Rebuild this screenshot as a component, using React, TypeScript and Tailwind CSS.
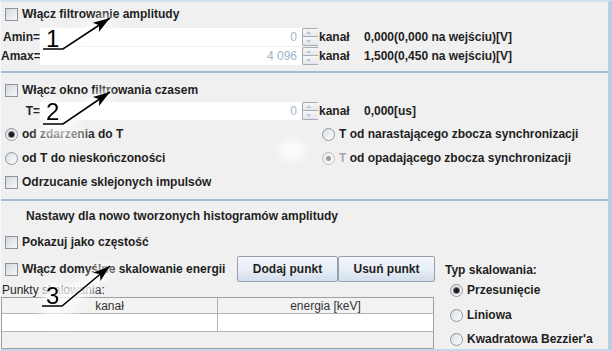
import React from "react";

const Check = () => (
  <span className="w-[13px] h-[13px] shrink-0 border border-[#8f9296] bg-linear-to-br from-[#d2d8df] to-[#f7f8fa]" />
);

const Radio = ({ on, dim }: { on?: boolean; dim?: boolean }) => (
  <span
    className={
      dim
        ? "w-[13px] h-[13px] shrink-0 rounded-full border border-[#b9bec4] bg-linear-to-br from-[#e6e8eb] to-white flex items-center justify-center"
        : "w-[13px] h-[13px] shrink-0 rounded-full border border-[#8e96a0] bg-linear-to-br from-[#d8dde3] to-white flex items-center justify-center"
    }
  >
    {on && (
      <span
        className={
          dim
            ? "w-[5px] h-[5px] rounded-full bg-[#9a9a9a]"
            : "w-[5px] h-[5px] rounded-full bg-[#1b1b1b] ring-1 ring-[#7d7d7d]"
        }
      />
    )}
  </span>
);

const CheckRow = ({ label, className = "" }: { label: string; className?: string }) => (
  <div className={"flex items-center h-[20px] gap-[4px] pl-[4px] " + className}>
    <Check />
    <span>{label}</span>
  </div>
);

const RadioRow = ({ label, on, dim }: { label: React.ReactNode; on?: boolean; dim?: boolean }) => (
  <div className="flex items-center h-[20px] gap-[4px]">
    <Radio on={on} dim={dim} />
    <span>{label}</span>
  </div>
);

const Spinner = () => (
  <div className="w-[16px] h-[18px] flex flex-col">
    <div className="h-[9px] border-l border-t border-b border-[#a9adb3] rounded-tl-[2px] bg-linear-to-b from-[#f6f7f9] to-[#e3e6ea] flex items-center pl-[3px]">
      <svg width="5" height="3" viewBox="0 0 5 3">
        <path d="M0 3 L2.5 0 L5 3 Z" fill="#bcc6d2" />
      </svg>
    </div>
    <div className="h-[9px] border-l border-b border-[#a9adb3] rounded-bl-[2px] bg-linear-to-b from-[#f6f7f9] to-[#e3e6ea] flex items-center pl-[3px]">
      <svg width="5" height="3" viewBox="0 0 5 3">
        <path d="M0 0 L2.5 3 L5 0 Z" fill="#bcc6d2" />
      </svg>
    </div>
  </div>
);

const ValueRow = ({
  label,
  value,
  reading,
  className = "",
}: {
  label: string;
  value: string;
  reading: string;
  className?: string;
}) => (
  <div className={"flex items-center h-[18px] " + className}>
    <span className="w-[39px] text-right">{label}</span>
    <div className="w-[262px] h-[18px] bg-white flex items-center justify-end pr-[5px] font-normal text-[#a2b5cc]">
      {value}
    </div>
    <Spinner />
    <span className="w-[46px] pl-[1px]">kanał</span>
    <span>{reading}</span>
  </div>
);

const Button = ({ label, className = "" }: { label: string; className?: string }) => (
  <div
    className={
      "h-[26px] flex items-center justify-center border border-[#96a0ac] rounded-[2px] bg-linear-to-b from-[#f4f7fb] via-[#e8eef6] to-[#d3dfee] " +
      className
    }
  >
    {label}
  </div>
);

// numbered arrows drawn over the form
const marks = [
  { n: "1", lx: 43, ly: 49, tx: 110, ty: 18, dx: 46, dy: 47 },
  { n: "2", lx: 43, ly: 124, tx: 110, ty: 92, dx: 46, dy: 120 },
  { n: "3", lx: 42, ly: 306, tx: 110, ty: 266, dx: 46, dy: 304 },
];

const head = (sx: number, sy: number, tx: number, ty: number) => {
  const len = Math.hypot(tx - sx, ty - sy);
  const ux = (tx - sx) / len;
  const uy = (ty - sy) / len;
  const bx = tx - 17 * ux;
  const by = ty - 17 * uy;
  const nx = -uy;
  const ny = ux;
  const pts = [
    [tx, ty],
    [bx + 5.5 * nx, by + 5.5 * ny],
    [bx + 4 * ux, by + 4 * uy],
    [bx - 5.5 * nx, by - 5.5 * ny],
  ];
  return pts.map((p) => p.join(",")).join(" ");
};

const Annotations = () => (
  <svg
    className="absolute left-[-1px] top-[-2px] pointer-events-none"
    width="612"
    height="351"
    viewBox="0 0 612 351"
  >
    <defs>
      <filter id="halo" x="-50%" y="-50%" width="200%" height="200%">
        <feGaussianBlur stdDeviation="4" />
      </filter>
    </defs>
    <g filter="url(#halo)" fill="#fff">
      <ellipse cx="292" cy="150" rx="14" ry="10" opacity="0.8" />
      <ellipse cx="62" cy="134" rx="28" ry="5" opacity="0.75" />
      <ellipse cx="70" cy="290" rx="26" ry="5" opacity="0.75" />
      <ellipse cx="60" cy="318" rx="22" ry="7" opacity="0.6" />
    </g>
    {marks.map((m) => {
      const line = `${m.lx},${m.ly} ${m.lx + 20},${m.ly} ${m.tx},${m.ty}`;
      return (
        <g key={m.n}>
          <g filter="url(#halo)" opacity="0.85">
            <polyline points={line} fill="none" stroke="#fff" strokeWidth="12" strokeLinejoin="round" />
            <text
              x={m.dx}
              y={m.dy}
              fontFamily="'Liberation Sans', Arial, sans-serif"
              fontSize="24"
              fontWeight="400"
              fill="#fff"
              stroke="#fff"
              strokeWidth="8"
            >
              {m.n}
            </text>
          </g>
          <polyline points={line} fill="none" stroke="#000" strokeWidth="1.6" />
          <polygon points={head(m.lx + 20, m.ly, m.tx, m.ty)} fill="#000" />
          <text
            x={m.dx}
            y={m.dy}
            fontFamily="'Liberation Sans', Arial, sans-serif"
            fontSize="24"
            fontWeight="400"
            fill="#000"
          >
            {m.n}
          </text>
        </g>
      );
    })}
  </svg>
);

export default function App() {
  return (
    <div className="relative w-[612px] h-[351px] overflow-hidden bg-[#f0f0f0] border-l border-l-[#f6f8fb] border-t-2 border-t-[#d3e0f0] border-b-2 border-b-[#c5d6ea] border-r-4 border-r-[#bacde4] font-['Liberation_Sans',Arial,sans-serif] text-[12px] font-bold text-[#1f1f1f] leading-none">
      {/* amplituda */}
      <div className="pt-[2px]">
        <CheckRow label="Włącz filtrowanie amplitudy" />
        <ValueRow className="mt-[4px]" label="Amin=" value="0" reading="0,000(0,000 na wejściu)[V]" />
        <ValueRow className="mt-[1px]" label="Amax=" value="4 096" reading="1,500(0,450 na wejściu)[V]" />
      </div>
      <div className="mt-[6px] h-[2px] bg-[#aab9d8]" />

      {/* okno czasowe */}
      <div>
        <CheckRow className="mt-[7px]" label="Włącz okno filtrowania czasem" />
        <ValueRow className="mt-[2px]" label="T=" value="0" reading="0,000[us]" />
        <div className="mt-[4px] flex pl-[4px]">
          <div className="w-[317px]">
            <RadioRow on label="od zdarzenia do T" />
          </div>
          <RadioRow label="T od narastającego zbocza synchronizacji" />
        </div>
        <div className="mt-[4px] flex pl-[4px]">
          <div className="w-[317px]">
            <RadioRow label="od T do nieskończoności" />
          </div>
          <RadioRow
            on
            dim
            label={
              <>
                <span className="text-[#a8a8a8]">T</span> od opadającego zbocza synchronizacji
              </>
            }
          />
        </div>
        <CheckRow className="mt-[4px]" label="Odrzucanie sklejonych impulsów" />
      </div>
      <div className="mt-[7px] h-[2px] bg-[#aab9d8]" />

      {/* histogramy */}
      <div>
        <div className="mt-[5px] h-[20px] flex items-center pl-[25px]">
          Nastawy dla nowo tworzonych histogramów amplitudy
        </div>
        <CheckRow className="mt-[6px]" label="Pokazuj jako częstość" />
        <div className="mt-[4px] flex">
          <div className="w-[434px] flex flex-col">
            <div className="flex items-center">
              <div className="w-[236px] flex items-center gap-[4px] pl-[4px]">
                <Check />
                <span>Włącz domyślne skalowanie energii</span>
              </div>
              <Button className="w-[101px]" label="Dodaj punkt" />
              <Button className="w-[97px]" label="Usuń punkt" />
            </div>
            <div className="h-[15px] flex items-center pl-[1px] font-normal">Punkty skalowania:</div>
            <div className="w-[433px] h-[52px] border border-[#a0a0a0] flex flex-col font-normal text-[#333]">
              <div className="h-[16px] flex border-b border-[#b4b4b4] bg-[#f3f3f3]">
                <div className="w-[216px] border-r border-[#b4b4b4] flex items-center justify-center">kanał</div>
                <div className="flex-1 flex items-center justify-center">energia [keV]</div>
              </div>
              <div className="h-[18px] flex bg-white border-b border-[#b4b4b4]">
                <div className="w-[216px] border-r border-[#b4b4b4]" />
              </div>
              <div className="flex-1" />
            </div>
          </div>
          <div className="ml-[10px] pt-[4px] flex flex-col">
            <div className="h-[20px] flex items-center">Typ skalowania:</div>
            <div className="pl-[5px]">
              <RadioRow on label="Przesunięcie" />
              <div className="mt-[5px]">
                <RadioRow label="Liniowa" />
              </div>
              <div className="mt-[4px]">
                <RadioRow label="Kwadratowa Bezzier'a" />
              </div>
            </div>
          </div>
        </div>
      </div>

      <Annotations />
    </div>
  );
}
